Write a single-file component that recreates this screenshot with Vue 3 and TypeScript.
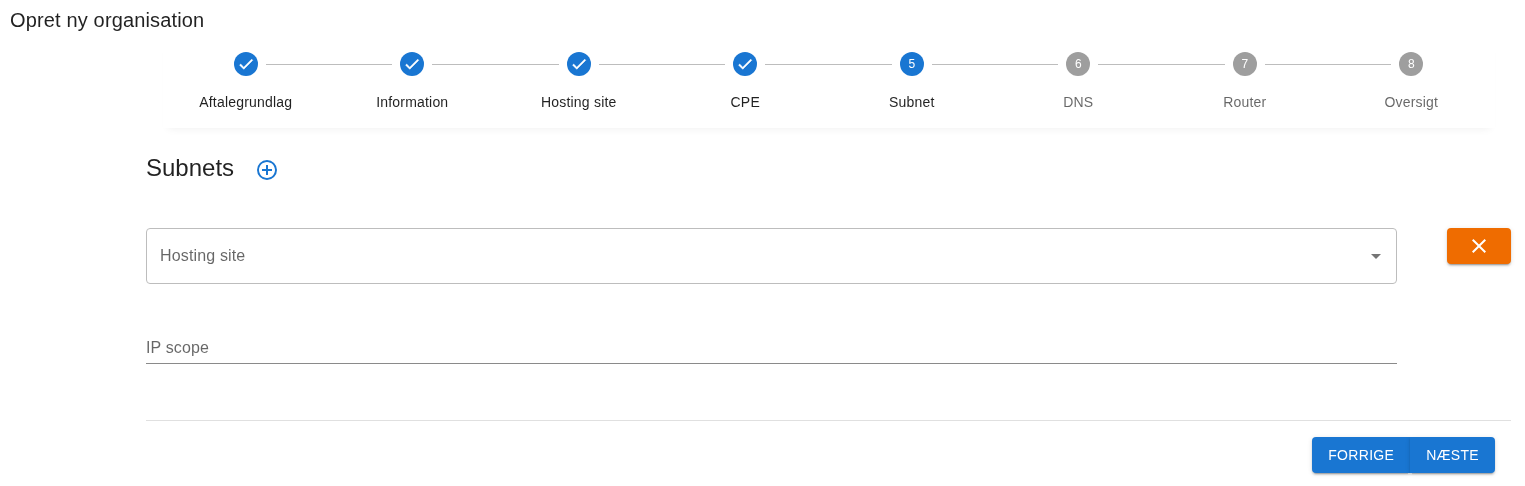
<script setup lang="ts">
	// Steps of the wizard, the first four are done
	const steps: string[] = ["Aftalegrundlag", "Information", "Hosting site", "CPE", "Subnet", "DNS", "Router", "Oversigt"];
	const current = 5;
</script>
<template>
	<div class="page">
		<h1 class="title">Opret ny organisation</h1>

		<div class="stepper">
			<div v-for="(step, i) in steps" :key="step" class="step">
				<div class="step-top">
					<span class="line" :class="{ hidden: i === 0 }"></span>
					<span class="circle" :class="{ todo: i + 1 > current }">
						<svg v-if="i + 1 < current" width="18" height="18" viewBox="0 0 24 24">
							<path fill="#fff" stroke="#fff" stroke-width="0.7" d="M21,7L9,19L3.5,13.5L4.91,12.09L9,16.17L19.59,5.59L21,7Z" />
						</svg>
						<template v-else>{{ i + 1 }}</template>
					</span>
					<span class="line" :class="{ hidden: i === steps.length - 1 }"></span>
				</div>
				<div class="label" :class="{ muted: i + 1 > current }">{{ step }}</div>
			</div>
		</div>

		<div class="content">
			<div class="heading">
				<h2>Subnets</h2>
				<svg class="add" width="24" height="24" viewBox="0 0 24 24">
					<path
						fill="#1976d2"
						d="M12,20C7.59,20 4,16.41 4,12C4,7.59 7.59,4 12,4C16.41,4 20,7.59 20,12C20,16.41 16.41,20 12,20M12,2A10,10 0 0,0 2,12A10,10 0 0,0 12,22A10,10 0 0,0 22,12A10,10 0 0,0 12,2M13,7H11V11H7V13H11V17H13V13H17V11H13V7Z"
					/>
				</svg>
			</div>

			<div class="row">
				<div class="fields">
					<div class="select">
						<span>Hosting site</span>
						<svg width="24" height="24" viewBox="0 0 24 24">
							<path fill="#757575" d="M7,10L12,15L17,10H7Z" />
						</svg>
					</div>
					<div class="text-field">IP scope</div>
				</div>
				<button class="remove" type="button">
					<svg width="24" height="24" viewBox="0 0 24 24">
						<path
							fill="#fff"
							d="M19,6.41L17.59,5L12,10.59L6.41,5L5,6.41L10.59,12L5,17.59L6.41,19L12,13.41L17.59,19L19,17.59L13.41,12L19,6.41Z"
						/>
					</svg>
				</button>
			</div>

			<div class="actions">
				<button class="nav" type="button">Forrige</button>
				<button class="nav" type="button">Næste</button>
			</div>
		</div>
	</div>
</template>

<style>
	html,
	body {
		background: #fff;
	}
</style>

<style scoped>
	.page {
		font-family: "Liberation Sans", Arial, sans-serif;
		color: rgba(0, 0, 0, 0.87);
		height: 486px;
		overflow: hidden;
		will-change: transform;
	}

	.title {
		margin: 0;
		padding: 6px 10px 0;
		height: 40px;
		box-sizing: border-box;
		font-size: 20px;
		line-height: 28px;
		font-weight: 400;
		letter-spacing: 0.15px;
	}

	.stepper {
		display: grid;
		grid-template-columns: repeat(8, 1fr);
		margin: 0 30.5px 0 162.5px;
		height: 88px;
		padding-top: 12px;
		box-sizing: border-box;
		background: #fff;
		box-shadow: 0 6px 8px -5px rgba(0, 0, 0, 0.06);
	}

	.step-top {
		display: flex;
		align-items: center;
		height: 24px;
	}

	.line {
		flex: 1;
		height: 1px;
		background: #bdbdbd;
	}

	.line.hidden {
		visibility: hidden;
	}

	.circle {
		display: flex;
		align-items: center;
		justify-content: center;
		width: 24px;
		height: 24px;
		margin: 0 8px;
		border-radius: 50%;
		background: #1976d2;
		color: #fff;
		font-size: 12px;
	}

	.circle.todo {
		background: #9e9e9e;
	}

	.label {
		margin-top: 16px;
		text-align: center;
		font-size: 14px;
		line-height: 20px;
		letter-spacing: 0.2px;
	}

	.label.muted {
		color: rgba(0, 0, 0, 0.6);
	}

	.content {
		margin: 0 14px 0 146px;
	}

	.heading {
		display: flex;
		align-items: center;
		height: 36px;
		margin-top: 22px;
	}

	.heading h2 {
		margin: 0;
		font-size: 24px;
		line-height: 32px;
		font-weight: 400;
	}

	.add {
		margin-left: 21px;
		margin-top: 4px;
	}

	.row {
		display: flex;
		align-items: flex-start;
		gap: 50px;
		margin-top: 42px;
		padding-bottom: 56px;
		border-bottom: 1px solid #e0e0e0;
	}

	.fields {
		flex: 1;
	}

	.select {
		display: flex;
		align-items: center;
		justify-content: space-between;
		height: 56px;
		box-sizing: border-box;
		padding: 0 8px 0 13px;
		border: 1px solid #bdbdbd;
		border-radius: 4px;
		font-size: 16px;
		letter-spacing: 0.15px;
		color: rgba(0, 0, 0, 0.6);
	}

	.text-field {
		height: 32px;
		margin-top: 48px;
		line-height: 32px;
		box-sizing: border-box;
		font-size: 16px;
		letter-spacing: 0.15px;
		color: rgba(0, 0, 0, 0.6);
		border-bottom: 1px solid #8a8a8a;
	}

	.remove {
		display: flex;
		align-items: center;
		justify-content: center;
		width: 64px;
		height: 36px;
		padding: 0;
		border: none;
		border-radius: 4px;
		background: #ef6c00;
		box-shadow: 0 3px 1px -2px rgba(0, 0, 0, 0.2), 0 2px 2px 0 rgba(0, 0, 0, 0.14), 0 1px 5px 0 rgba(0, 0, 0, 0.12);
	}

	.actions {
		display: flex;
		justify-content: flex-end;
		margin-top: 16px;
		padding-right: 16px;
	}

	.nav {
		height: 36px;
		padding: 0 16px;
		border: none;
		border-radius: 0 4px 4px 0;
		background: #1976d2;
		color: #fff;
		font-family: inherit;
		font-size: 14px;
		font-weight: 400;
		letter-spacing: 0.3px;
		text-transform: uppercase;
		box-shadow: 0 3px 1px -2px rgba(0, 0, 0, 0.2), 0 2px 2px 0 rgba(0, 0, 0, 0.14), 0 1px 5px 0 rgba(0, 0, 0, 0.12);
	}

	.nav:first-child {
		border-radius: 4px 0 0 4px;
	}
</style>
